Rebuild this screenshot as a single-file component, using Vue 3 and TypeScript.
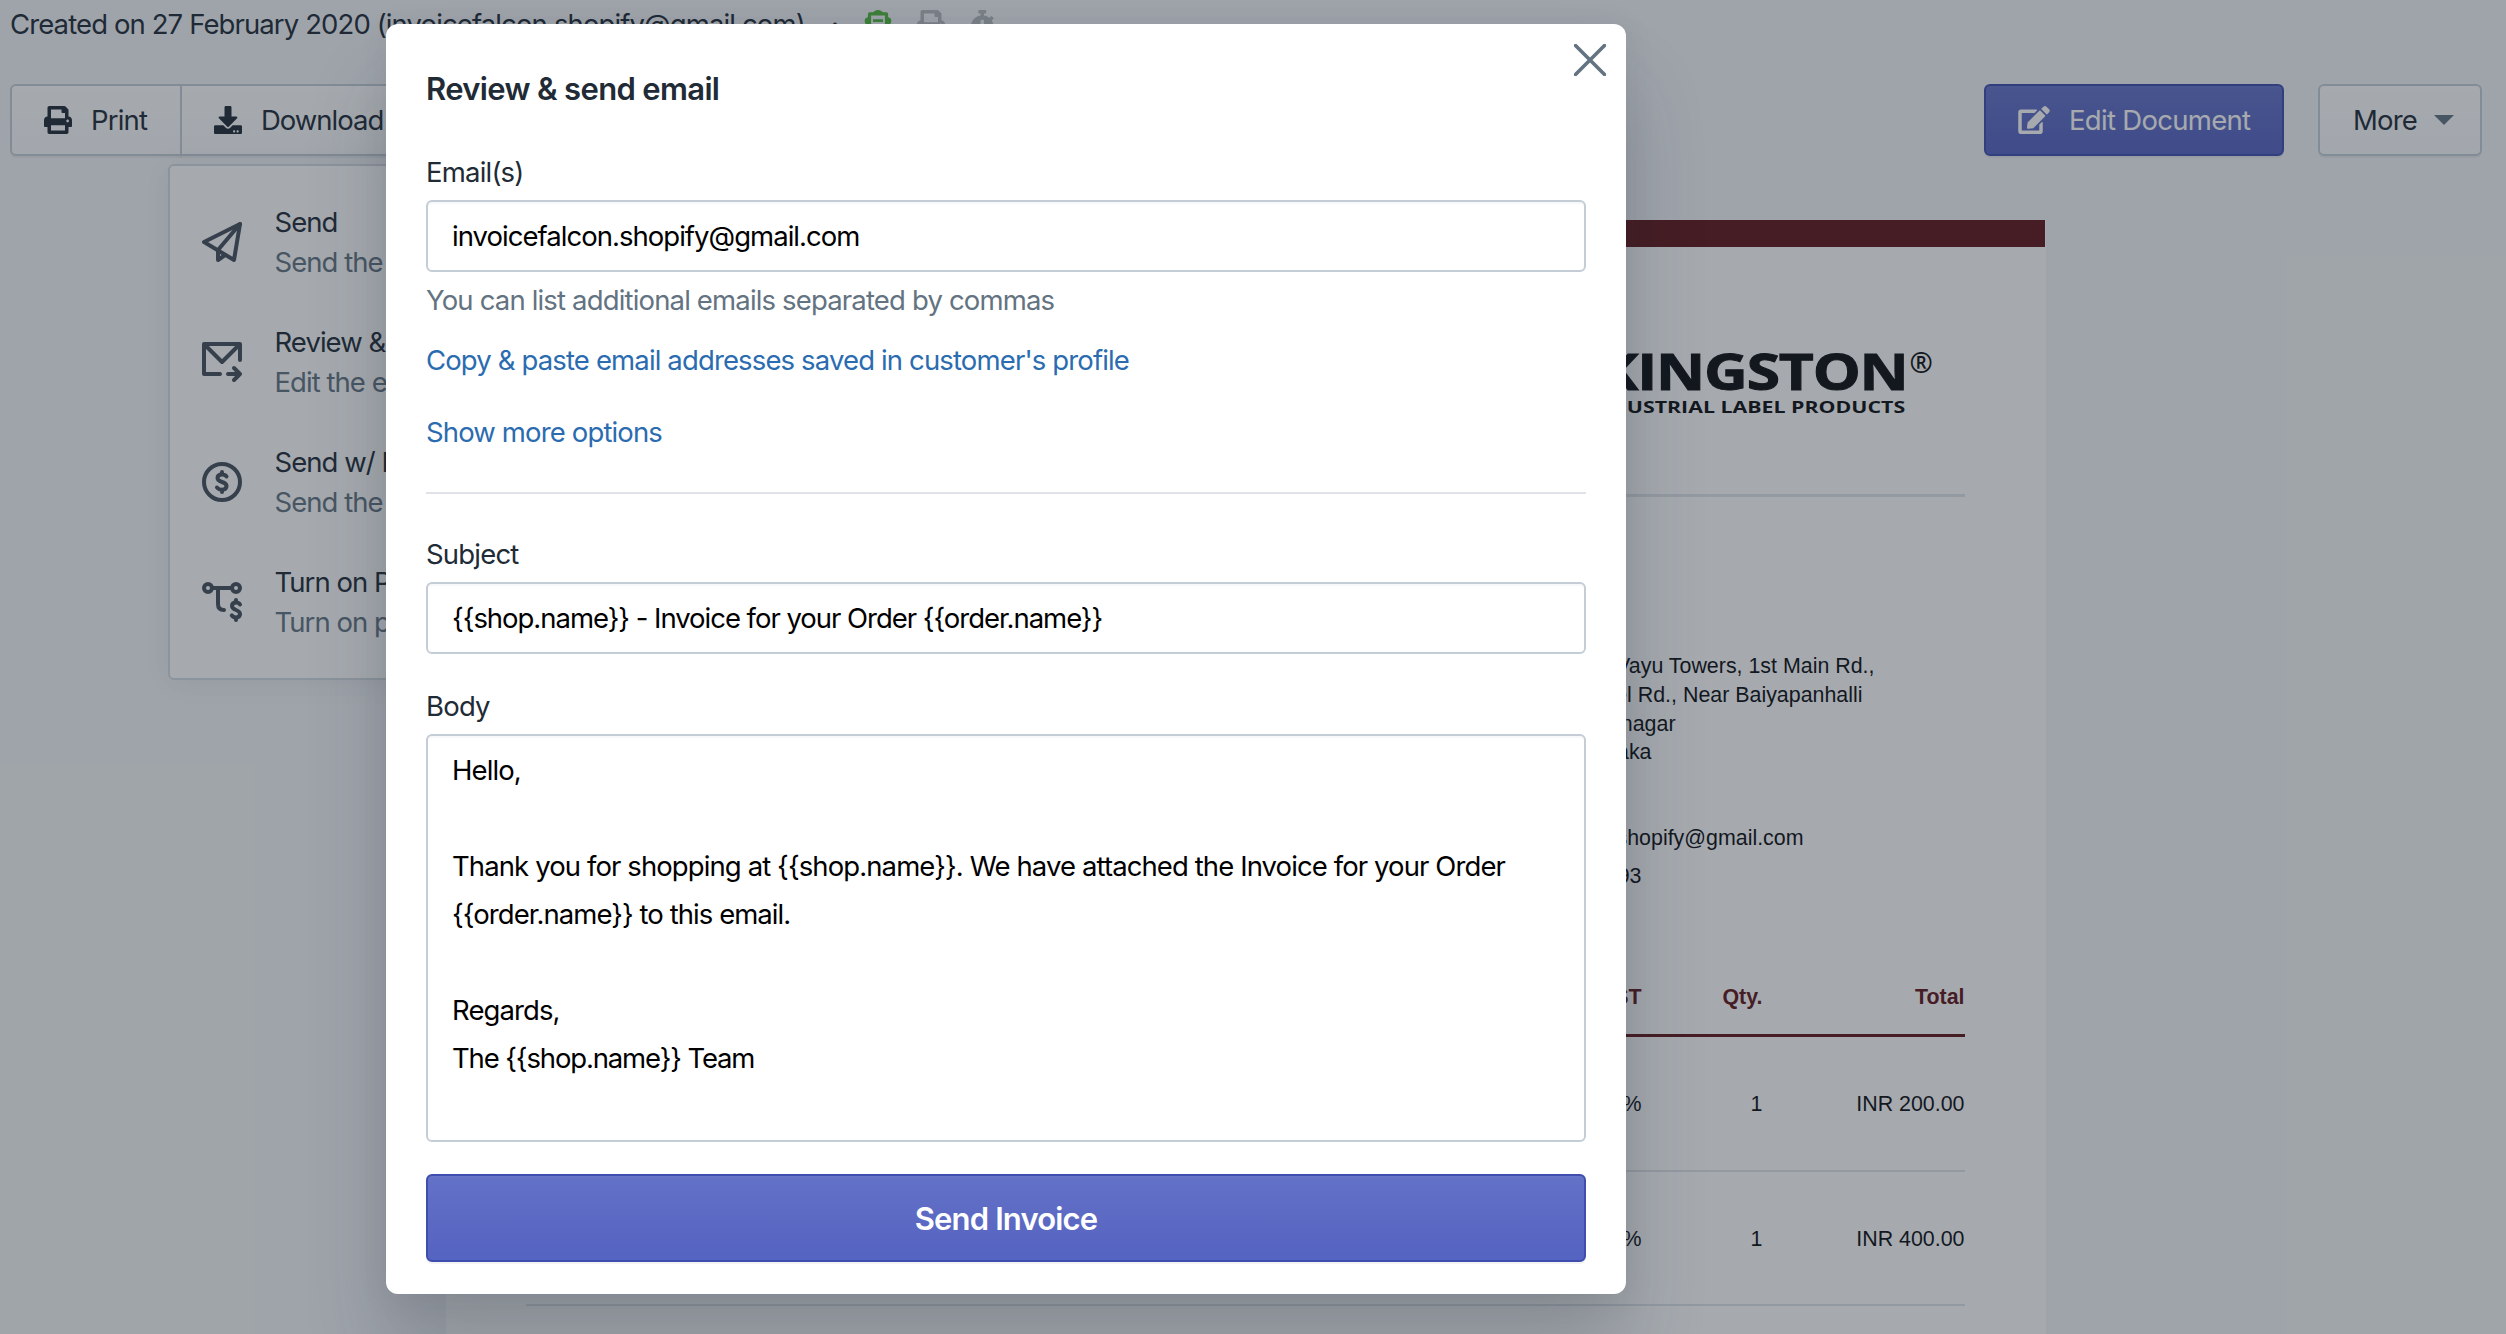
<script setup lang="ts">
import { ref } from 'vue'

interface MenuItem {
  icon: string
  title: string
  hint: string
}

const menu: MenuItem[] = [
  { icon: 'plane', title: 'Send', hint: 'Send the invoice' },
  { icon: 'mail', title: 'Review & send', hint: 'Edit the email' },
  { icon: 'dollar', title: 'Send w/ PDF', hint: 'Send the invoice' },
  { icon: 'flow', title: 'Turn on PDF', hint: 'Turn on pdf' },
]

const rows = [
  { tax: '18%', qty: '1', total: 'INR 200.00' },
  { tax: '18%', qty: '1', total: 'INR 400.00' },
]

const email = 'invoicefalcon.shopify@gmail.com'
const subject = '{{shop.name}} - Invoice for your Order {{order.name}}'
const bodyLines = ref<string[]>([
  'Hello,',
  '',
  'Thank you for shopping at {{shop.name}}. We have attached the Invoice for your Order',
  '{{order.name}} to this email.',
  '',
  'Regards,',
  'The {{shop.name}} Team',
])
</script>

<template>
  <div class="page">
    <header class="meta">
      <span class="created">Created on 27 February 2020 (invoicefalcon.shopify@gmail.com)</span>
      <span class="dot">·</span>
      <svg class="status green" viewBox="0 0 28 28"><path d="M5.500 3.800h17v20h-17z" fill="none" stroke="currentColor" stroke-width="3.200" stroke-linejoin="round" /><path d="M8.500 3.500C9.500 1.500 11.500 0 14 0s4.500 1.500 5.500 3.500zM5 6.500v9L1.200 13.500Q0 11 1.200 8.500zM23 6.500v9l3.800-2Q28 11 26.800 8.500zM9 9.300h10v2.600H9z" fill="currentColor" /></svg>
      <svg class="status" viewBox="0 0 512 512"><path fill="currentColor" d="M448 192V77.250c0-8.490-3.370-16.620-9.370-22.630L393.370 9.370c-6-6-14.140-9.370-22.630-9.370H96C78.330 0 64 14.330 64 32v160c-35.350 0-64 28.650-64 64v112c0 8.840 7.160 16 16 16h48v96c0 17.670 14.330 32 32 32h320c17.670 0 32-14.330 32-32v-96h48c8.840 0 16-7.160 16-16V256c0-35.350-28.650-64-64-64zm-64 256H128v-96h256v96zm0-224H128V64h192v48c0 8.840 7.160 16 16 16h48v96zm48 72c-13.250 0-24-10.750-24-24 0-13.260 10.750-24 24-24s24 10.740 24 24c0 13.250-10.750 24-24 24z" /></svg>
      <svg class="status narrow" viewBox="0 0 448 512"><path fill="currentColor" d="M432 304c0 114.900-93.100 208-208 208S16 418.900 16 304c0-104 76.300-190.200 176-205.500V64h-28c-6.600 0-12-5.400-12-12V12c0-6.600 5.400-12 12-12h120c6.600 0 12 5.400 12 12v40c0 6.600-5.400 12-12 12h-28v34.500c37.500 5.800 71.700 21.600 99.700 44.600l27.500-27.500c4.700-4.700 12.300-4.700 17 0l28.300 28.300c4.700 4.700 4.700 12.300 0 17l-29.400 29.400-.600.600C419.700 223.300 432 262.200 432 304zm-176 36V188.500c0-6.600-5.400-12-12-12h-40c-6.600 0-12 5.400-12 12V340c0 6.600 5.400 12 12 12h40c6.600 0 12-5.400 12-12z" /></svg>
    </header>

    <div class="toolbar">
      <div class="group">
        <button class="btn print">
          <svg viewBox="0 0 512 512"><path fill="currentColor" d="M448 192V77.250c0-8.490-3.370-16.620-9.370-22.630L393.370 9.370c-6-6-14.140-9.370-22.630-9.370H96C78.330 0 64 14.330 64 32v160c-35.350 0-64 28.650-64 64v112c0 8.840 7.160 16 16 16h48v96c0 17.670 14.330 32 32 32h320c17.670 0 32-14.330 32-32v-96h48c8.840 0 16-7.160 16-16V256c0-35.350-28.650-64-64-64zm-64 256H128v-96h256v96zm0-224H128V64h192v48c0 8.840 7.160 16 16 16h48v96zm48 72c-13.250 0-24-10.750-24-24 0-13.260 10.750-24 24-24s24 10.740 24 24c0 13.250-10.750 24-24 24z" /></svg>
          <span>Print</span>
        </button>
        <button class="btn download">
          <svg viewBox="0 0 512 512"><path fill="currentColor" d="M216 0h80c13.300 0 24 10.700 24 24v168h87.700c17.800 0 26.700 21.500 14.100 34.100L269.700 378.300c-7.500 7.500-19.800 7.500-27.300 0L90.100 226.100c-12.600-12.600-3.700-34.100 14.100-34.100H192V24c0-13.300 10.700-24 24-24zm296 376v112c0 13.300-10.700 24-24 24H24c-13.300 0-24-10.700-24-24V376c0-13.300 10.700-24 24-24h146.700l49 49c20.100 20.100 52.500 20.100 72.600 0l49-49H488c13.300 0 24 10.700 24 24zm-124 88c0-11-9-20-20-20s-20 9-20 20 9 20 20 20 20-9 20-20zm64 0c0-11-9-20-20-20s-20 9-20 20 9 20 20 20 20-9 20-20z" /></svg>
          <span>Download</span>
        </button>
      </div>
      <div class="actions">
        <button class="btn primary">
          <svg viewBox="0 0 576 512"><path fill="currentColor" d="M402.600 83.200l90.200 90.200c3.800 3.800 3.800 10 0 13.800L274.400 405.600l-92.800 10.300c-12.400 1.400-22.900-9.100-21.500-21.500l10.300-92.800L388.800 83.200c3.800-3.800 10-3.800 13.800 0zm162-22.900l-48.800-48.800c-15.200-15.200-39.900-15.200-55.200 0l-35.400 35.400c-3.800 3.800-3.800 10 0 13.800l90.200 90.200c3.800 3.800 10 3.800 13.800 0l35.400-35.400c15.200-15.300 15.200-40 0-55.200zM384 346.200V448H64V128h229.800c3.200 0 6.200-1.300 8.500-3.500l40-40c7.600-7.600 2.200-20.500-8.500-20.500H48C21.500 64 0 85.500 0 112v352c0 26.500 21.500 48 48 48h352c26.500 0 48-21.500 48-48V306.200c0-10.700-12.900-16-20.500-8.500l-40 40c-2.200 2.300-3.500 5.300-3.500 8.500z" /></svg>
          <span>Edit Document</span>
        </button>
        <button class="btn more"><span>More</span><i class="caret"></i></button>
      </div>
    </div>

    <main class="document">
      <div class="band"></div>
      <div class="sheet">
        <div class="logo">
          <div class="brand"><span class="brand-name">KINGSTON</span><span class="reg">®</span></div>
          <div class="brand-sub">INDUSTRIAL LABEL PRODUCTS</div>
        </div>
        <div class="address">
          <p class="a1">Vayu Towers, 1st Main Rd.,</p>
          <p class="a2">Channel Rd., Near Baiyapanhalli</p>
          <p class="a3">Indiranagar</p>
          <p class="a4">Karnataka</p>
          <p class="a5">invoicefalcon.shopify@gmail.com</p>
          <p class="a6">93</p>
        </div>
        <div class="table">
          <div class="row head"><span class="tax">GST</span><span class="qty">Qty.</span><span class="total">Total</span></div>
          <div v-for="(r, i) in rows" :key="i" class="row item">
            <span class="tax">{{ r.tax }}</span><span class="qty one">{{ r.qty }}</span><span class="total">{{ r.total }}</span>
          </div>
        </div>
      </div>
    </main>

    <div class="popover">
      <div v-for="item in menu" :key="item.title" class="entry">
        <svg viewBox="0 0 40 40" fill="none" stroke="currentColor" stroke-width="4" stroke-linejoin="round" stroke-linecap="round">
          <template v-if="item.icon === 'plane'">
            <path d="M38 2 2 20 32 38z" /><path d="M38 2 16 28v10l7-5" />
          </template>
          <template v-else-if="item.icon === 'mail'">
            <path d="M18 32H2V2h36v16" /><path d="M3 3l17 17L37 3" /><path d="M26 32h12M32 26l6 6-6 6" />
          </template>
          <template v-else-if="item.icon === 'dollar'">
            <circle cx="20" cy="20" r="18" /><path d="M24.500 14.500c-1-1.500-2.500-2-4.500-2-3 0-4.500 1.300-4.500 3.500 0 5 9 3 9 8 0 2.300-1.700 3.700-4.500 3.700-2.300 0-4-.700-5-2.200M20 10v2.500M20 28v2" />
          </template>
          <template v-else>
            <circle cx="6" cy="6" r="4" /><circle cx="34" cy="6" r="4" /><path d="M10 6h20M16 6v16c0 4 2 6 6 6" />
            <path d="M38 22.500c-1-1.500-2.300-2-4-2-2.700 0-4 1.300-4 3.500 0 4.700 8 3.300 8 8 0 2.200-1.600 3.400-4 3.400-2 0-3.300-.600-4.200-2M34 18v2.500M34 36v2" />
          </template>
        </svg>
        <div class="words">
          <div class="title">{{ item.title }}</div>
          <div class="hint">{{ item.hint }}</div>
        </div>
      </div>
    </div>

    <div class="overlay">
      <section class="modal">
        <svg class="close" viewBox="0 0 32 32"><path d="M1.500 1.500l29 29M30.500 1.500l-29 29" fill="none" stroke="#637381" stroke-width="3.600" stroke-linecap="round" /></svg>
        <h2>Review &amp; send email</h2>
        <label class="l-email">Email(s)</label>
        <div class="field f-email">{{ email }}</div>
        <p class="help">You can list additional emails separated by commas</p>
        <a class="link copy">Copy &amp; paste email addresses saved in customer's profile</a>
        <a class="link options">Show more options</a>
        <hr />
        <label class="l-subject">Subject</label>
        <div class="field f-subject">{{ subject }}</div>
        <label class="l-body">Body</label>
        <div class="area"><div v-for="(line, i) in bodyLines" :key="i" :class="['line', 'n' + i]">{{ line }}</div></div>
        <button class="send">Send Invoice</button>
      </section>
    </div>
  </div>
</template>

<style>
body { margin: 0; background: #f4f6f8; }
</style>

<style scoped>
.page {
  position: relative;
  width: 2506px;
  height: 1334px;
  overflow: hidden;
  background: #f4f6f8;
  color: #212b36;
  font: 400 27.500px/40px Inter, "Liberation Sans", sans-serif;
  letter-spacing: -0.800px;
  white-space: nowrap;
}
.page * { box-sizing: border-box; }
p, h2 { margin: 0; font-weight: 400; }
button { font: inherit; letter-spacing: inherit; color: inherit; margin: 0; }

.meta { display: flex; height: 84px; padding: 4px 0 0 10px; }
.created { width: 821px; letter-spacing: -0.890px; }
.dot { width: 33px; }
.status { width: 28px; height: 28px; margin: 6px 25px 0 0; color: #b4b9bd; }
.status.narrow { width: 24.500px; }
.status.green { color: #50b83c; }

.toolbar { display: flex; justify-content: space-between; height: 72px; padding: 0 24px 0 10px; }
.group, .actions { display: flex; }
.actions { gap: 34px; }
.btn {
  display: flex;
  align-items: center;
  height: 72px;
  padding: 0;
  border: 2px solid #c4cdd5;
  border-radius: 6px;
  background: linear-gradient(#fff, #f9fafb);
  box-shadow: 0 2px 0 rgba(22, 29, 37, 0.05);
}
.btn svg { width: 28px; height: 28px; margin-right: 19px; }
.print { width: 172px; padding-left: 32px; border-radius: 6px 0 0 6px; }
.download { width: 260px; padding-left: 32px; margin-left: -2px; border-radius: 0; letter-spacing: -1px; }
.primary {
  width: 300px;
  padding-left: 32px;
  border-color: #3f4eae;
  background: linear-gradient(#6371c7, #5563c1);
  box-shadow: inset 0 2px 0 #6774c8, 0 2px 0 rgba(22, 29, 37, 0.05);
  color: #fff;
  letter-spacing: -0.700px;
}
.primary svg { width: 32px; }
.more { width: 164px; padding-left: 33px; }
.more span { width: 81px; text-align: left; }
.caret { border: 10px solid transparent; border-top-color: #637381; border-bottom: 0; }

.document { width: 1600px; height: 1114px; margin: 64px 0 0 446px; background: #fff; }
.band { width: 1599px; height: 27px; background: #5f1518; }
.sheet { padding: 0 81.500px 0 80px; color: #0b0d10; font: 400 21.400px/28.800px "Liberation Sans", sans-serif; letter-spacing: 0; }
.logo { height: 250px; padding-top: 102px; border-bottom: 3px solid #e2e5e8; display: flex; flex-direction: column; align-items: flex-end; }
.brand { display: flex; height: 48px; padding-right: 55px; }
.brand-name { font: 700 50px/44px "Open Sans", sans-serif; letter-spacing: -1px; transform: scaleX(1.210); transform-origin: right; -webkit-text-stroke: 1px #0b0d10; }
.reg { width: 0; font: 600 28px/26px "Open Sans", sans-serif; margin-left: 2px; }
.brand-sub { margin-right: 59px; font: 700 16.300px/20px "Open Sans", sans-serif; transform: scaleX(1.310); transform-origin: 100% 0; }
.address { display: flex; flex-direction: column; align-items: flex-end; padding-top: 155px; height: 464px; }
.a1 { margin-right: 90px; }
.a2 { margin-right: 102px; }
.a3 { margin-right: 289px; }
.a4 { margin-right: 313px; }
.a5 { margin: 57px 161px 0 0; }
.a6 { margin: 9px 323px 0 0; }
.row { display: flex; justify-content: flex-end; text-align: right; }
.row span { display: block; }
.tax { width: 100px; }
.qty { width: 121px; }
.total { width: 202px; }
.head { height: 76px; padding-top: 22px; border-bottom: 3px solid #5f1518; color: #5f1518; font-weight: 700; }
.item { height: 134.500px; padding-top: 53px; border-bottom: 2.500px solid #dfe3e8; }

.popover {
  position: absolute;
  left: 168px;
  top: 164px;
  width: 560px;
  height: 516px;
  padding-top: 38px;
  border: 2px solid #d3d9df;
  border-radius: 6px;
  background: #fff;
  box-shadow: 0 4px 32px rgba(33, 43, 54, 0.08);
}
.entry { display: flex; height: 120px; padding-left: 32px; }
.entry svg { width: 40px; height: 40px; margin: 18px 32.500px 0 0; color: #454f5b; overflow: visible; }
.words { margin-top: -2px; letter-spacing: -0.950px; }
.hint { color: #637381; }

.overlay { position: absolute; inset: 0; background: rgba(33, 43, 54, 0.4); padding: 24px 0 0 386px; }
.modal {
  position: relative;
  display: flex;
  flex-direction: column;
  width: 1240px;
  height: 1270px;
  padding: 43px 40px 0;
  border-radius: 12px;
  background: #fff;
  box-shadow: 0 62px 82px rgba(32, 42, 53, 0.2), 0 4px 32px rgba(32, 42, 54, 0.08);
}
.close { position: absolute; right: 20px; top: 20px; width: 32px; height: 32px; }
h2 { height: 85px; font: 600 31px/44px Inter, sans-serif; letter-spacing: -0.650px; }
label { display: block; height: 48px; line-height: 40px; }
.field { height: 72px; padding: 14px 24px; border: 2px solid #c4cdd5; border-radius: 6px; box-shadow: inset 0 2px 0 rgba(99, 115, 129, 0.05); color: #000; }
.f-email { letter-spacing: -0.970px; }
.f-subject { letter-spacing: -1.030px; }
.help { margin-top: 8px; height: 60px; color: #637381; letter-spacing: -0.840px; }
.link { height: 72px; color: #2b6cb0; letter-spacing: -0.860px; }
.options { height: 80px; }
hr { width: 100%; height: 2px; margin: 0 0 40px; border: 0; background: #dfe3e8; }
.l-body { margin-top: 32px; }
.area { height: 408px; padding: 10px 24px; border: 2px solid #c4cdd5; border-radius: 6px; box-shadow: inset 0 2px 0 rgba(99, 115, 129, 0.05); color: #000; letter-spacing: -0.900px; }
.line { height: 48px; line-height: 48px; }
.n3 { letter-spacing: -0.940px; }
.n6 { letter-spacing: -1.140px; }
.send {
  height: 88px;
  margin-top: 32px;
  padding: 1px 0 0;
  border: 2px solid #3f4eae;
  border-radius: 6px;
  background: linear-gradient(#6371c7, #5563c1);
  box-shadow: inset 0 2px 0 #6774c8, 0 2px 0 rgba(22, 29, 37, 0.05);
  color: #fff;
  font: 600 31px/44px Inter, sans-serif;
  letter-spacing: -0.850px;
}
</style>
